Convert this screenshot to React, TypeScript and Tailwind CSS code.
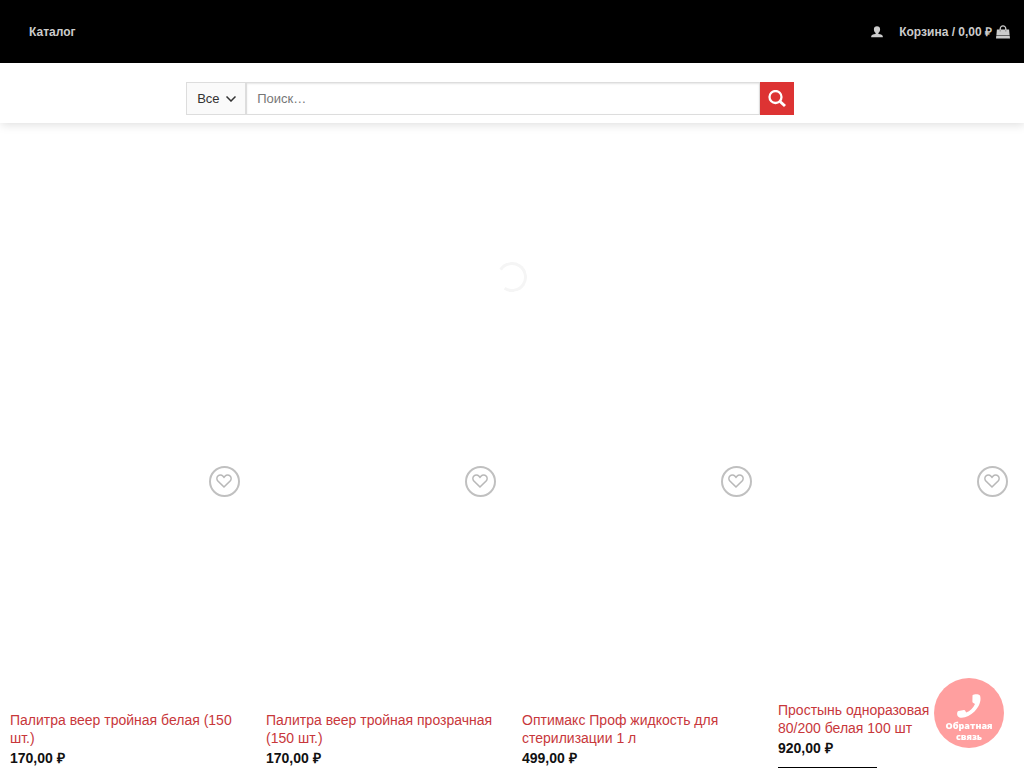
import React from 'react'

const products = [
    { title: 'Палитра веер тройная белая (150 шт.)', price: '170,00 ₽', short: false },
    { title: 'Палитра веер тройная прозрачная (150 шт.)', price: '170,00 ₽', short: false },
    { title: 'Оптимакс Проф жидкость для стерилизации 1 л', price: '499,00 ₽', short: false },
    { title: 'Простынь одноразовая 80/200\u00a0белая 100 шт', price: '920,00 ₽', short: true },
]

const UserIcon = () => (
    <svg viewBox="0 0 12 12" className="h-3 w-3" fill="currentColor" aria-hidden="true">
        <path d="M6 .3C4 .3 2.900 1.400 2.900 3.200c0 1.700.7 3 1.700 3.700v1C2 8.300.2 8.900.2 10.300V11.200h11.600v-.9C11.800 8.900 10 8.300 7.400 7.900v-1c1-.7 1.700-2 1.700-3.700C9.100 1.400 8 .3 6 .3Z" />
    </svg>
)

const BagIcon = () => (
    <svg viewBox="0 0 14 14" className="h-3.5 w-3.5" aria-hidden="true">
        <path d="M.9 4.500h12.200L13.600 10H.4ZM.3 10.400h13.400L14 13.500H0Z" fill="currentColor" />
        <path d="M4.200 6V3.800c0-3.900 5.600-3.900 5.600 0V6" fill="none" stroke="currentColor" strokeWidth="1.300" />
        <path d="M4.200 5v1.500M9.800 5v1.500" stroke="#888" strokeWidth="1" />
    </svg>
)

const SearchIcon = () => (
    <svg viewBox="0 0 18 18" className="h-[18px] w-[18px]" fill="none" stroke="currentColor" aria-hidden="true">
        <circle cx="7.500" cy="7" r="6" strokeWidth="2.300" />
        <path d="m12 11.500 5 4.500" strokeWidth="3" />
    </svg>
)

const HeartIcon = () => (
    <svg viewBox="0 0 17 15" className="h-[15px] w-[17px]" fill="none" stroke="currentColor" strokeWidth="1.600" aria-hidden="true">
        <path d="M8 13 1.900 7C.6 5.600.6 3.300 1.900 2c1.400-1.400 3.600-1.400 4.900 0L8 3.300 9.200 2c1.300-1.400 3.500-1.400 4.900 0 1.300 1.300 1.300 3.600 0 5Z" />
    </svg>
)

const PhoneIcon = () => (
    <svg viewBox="0 0 24 24" className="h-6 w-6" fill="currentColor" aria-hidden="true">
        <path d="M15.500 1.200C17.500-.2 21.500-.2 23 1.500c1.700 5-1 11.500-5.500 16C13 21.800 7.500 24.500 2.500 23.500.2 22.700-.3 20.200.4 18c.2-.6.6-.9 1.200-1l5.300-.9c.6-.1 1 .1 1.300.6l1 1.900c3.700-1.400 7.200-4.800 8.800-8.600l-2-1.200c-.5-.3-.7-.7-.6-1.300Z" />
    </svg>
)

const App = () => {
    return (
        <div className="h-screen overflow-hidden bg-white font-['Liberation_Sans',sans-serif] text-[#111]">
            <header className="relative shadow-[1px_1px_10px_rgba(0,0,0,0.15)]">
                <div className="flex h-[63px] items-center justify-between bg-black pr-3.5 pl-[29px] text-xs font-bold text-[#ccc]">
                    <nav>
                        <a href="#" className="hover:text-white">Каталог</a>
                    </nav>
                    <div className="flex items-center gap-4">
                        <a href="#" aria-label="Аккаунт" className="hover:text-white"><UserIcon /></a>
                        <a href="#" className="flex items-center gap-1 hover:text-white">
                            <span>Корзина / 0,00 ₽</span>
                            <BagIcon />
                        </a>
                    </div>
                </div>

                {/* Search */}
                <div className="flex h-[60px] justify-center pt-[19px] pr-11">
                    <form className="flex h-[33px] w-[62%] text-[13px]">
                        <div className="relative w-[60px] shrink-0">
                            <select aria-label="Категория" className="h-full w-full appearance-none border border-[#ddd] bg-[#fafafa] pl-2.5 text-[#333] outline-none">
                                <option>Все</option>
                            </select>
                            <svg viewBox="0 0 10 6" className="pointer-events-none absolute top-3.5 right-2.5 h-1.5 w-2.5" fill="none" stroke="#333" strokeWidth="1.500" aria-hidden="true">
                                <path d="m.5.5 4.500 4.500L9.500.5" />
                            </svg>
                        </div>
                        <input
                            type="search"
                            aria-label="Поиск"
                            placeholder="Поиск…"
                            className="min-w-0 flex-1 border border-[#ddd] bg-white px-2.5 shadow-[inset_0_1px_2px_rgba(0,0,0,0.1)] outline-none placeholder:text-[#777]"
                        />
                        <button type="submit" aria-label="Найти" className="flex w-[34px] items-center justify-center bg-[#dd3333] text-white">
                            <SearchIcon />
                        </button>
                    </form>
                </div>
            </header>

            <main>
                {/* Slider */}
                <div className="flex h-[308px] items-center justify-center">
                    <div className="h-[30px] w-[30px] -rotate-12 rounded-full border-3 border-[#f5f5f5] border-l-transparent" />
                </div>

                {/* Products */}
                <div className="grid grid-cols-4 pt-[25px]">
                    {products.map((product) => (
                        <div key={product.title} className="px-2.5">
                            <div className={product.short ? 'relative h-[245px]' : 'relative h-[255px]'}>
                                <button
                                    type="button"
                                    aria-label="В избранное"
                                    className="absolute top-2.5 right-1.5 flex h-[31px] w-[31px] items-center justify-center rounded-full border-2 border-[#c0c0c0] text-[#b8b8b8]"
                                >
                                    <HeartIcon />
                                </button>
                            </div>
                            <a href="#" className="block text-sm leading-[18px] text-[#c8373b]">{product.title}</a>
                            <p className="mt-0.5 text-sm leading-[18px] font-bold">{product.price}</p>
                            {product.short && (
                                <button type="button" aria-label="В корзину" className="mt-2.5 block h-8 w-[99px] bg-black" />
                            )}
                        </div>
                    ))}
                </div>
            </main>

            {/* Callback */}
            <button
                type="button"
                className="fixed right-5 bottom-5 flex h-[70px] w-[70px] flex-col items-center rounded-full bg-[#ff9f9f] pt-4 font-['Open_Sans',sans-serif] text-[9px] leading-[11px] font-extrabold text-white"
            >
                <PhoneIcon />
                <span className="mt-0.5">Обратная<br />связь</span>
            </button>
        </div>
    )
}

export default App
